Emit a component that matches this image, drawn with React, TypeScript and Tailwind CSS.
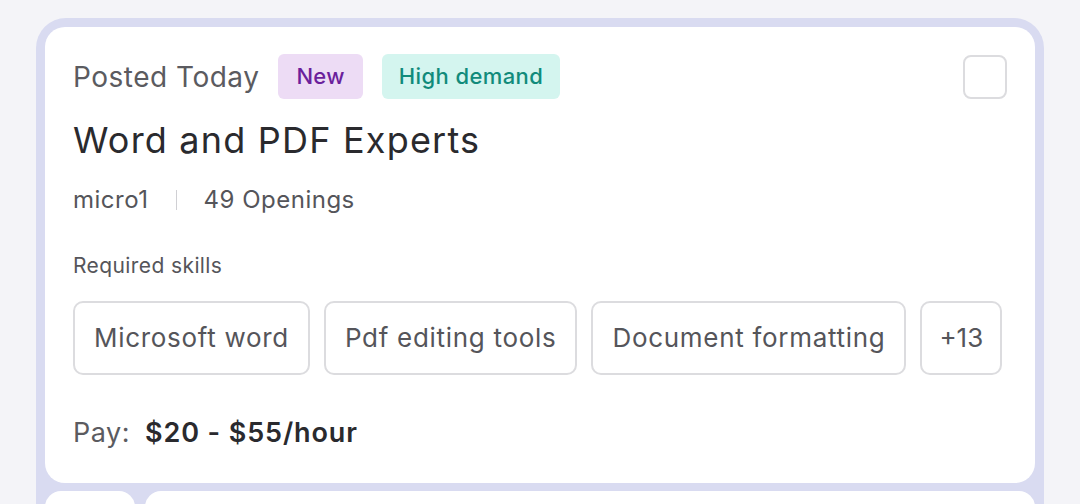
export default function App() {
  const skills = ["Microsoft word", "Pdf editing tools", "Document formatting"];

  return (
    <main
      className="h-[504px] w-[1080px] overflow-hidden bg-[#f4f4f8] px-[36px] pt-[18px]"
      style={{ fontFamily: "Inter, 'Noto Sans', sans-serif" }}
    >
      <div className="rounded-[30px] bg-[#d9dbf1] p-[9px]">
        <div className="rounded-[20px] bg-white px-[28px] pb-[30px] pt-[27px]">
          <div className="flex items-center justify-between">
            <div className="flex items-center">
              <span className="text-[28px] tracking-[0.5px] text-[#5b5b60]">Posted Today</span>
              <span className="ml-[19px] flex h-[45px] items-center rounded-[6px] bg-[#eddcf5] px-[18px] text-[22px] font-medium tracking-[0.3px] text-[#6b1f9c]">
                New
              </span>
              <span className="ml-[19px] flex h-[45px] items-center rounded-[6px] bg-[#d4f5ef] px-[17px] text-[22px] font-medium tracking-[0.4px] text-[#118b7b]">
                High demand
              </span>
            </div>
            <div className="h-[44px] w-[44px] rounded-[8px] border-2 border-[#dcdcdf]" />
          </div>

          <h1 className="mt-[19px] text-[36px] leading-[44px] tracking-[1.2px] text-[#2a2a2e]">
            Word and PDF Experts
          </h1>

          <div className="mt-[20px] flex items-center text-[24px] tracking-[0.5px] text-[#55555a]">
            <span>micro1</span>
            <span className="mx-[27px] h-[20px] w-[1px] bg-[#d0d0d4]" />
            <span>49 Openings</span>
          </div>

          <p className="mt-[32px] text-[21px] tracking-[0.4px] text-[#55555a]">Required skills</p>

          <div className="mt-[19px] flex gap-[14px]">
            {skills.map((s) => (
              <span
                key={s}
                className="flex h-[74px] items-center rounded-[10px] border-2 border-[#dcdcdf] px-[19px] text-[26px] tracking-[0.7px] text-[#55555a]"
              >
                {s}
              </span>
            ))}
            <span className="flex h-[74px] items-center rounded-[10px] border-2 border-[#dcdcdf] px-[17px] text-[26px] text-[#55555a]">
              +13
            </span>
          </div>

          <div className="mt-[38px] flex items-baseline gap-[15px] text-[27px]">
            <span className="tracking-[0.5px] text-[#5b5b60]">Pay:</span>
            <span className="font-semibold tracking-[0.9px] text-[#2a2a2e]">$20 - $55/hour</span>
          </div>
        </div>
        <div className="mt-[8px] flex gap-[10px]">
          <div className="h-[40px] w-[90px] rounded-[16px] bg-white" />
          <div className="h-[40px] flex-1 rounded-[16px] bg-white" />
        </div>
      </div>
    </main>
  );
}
